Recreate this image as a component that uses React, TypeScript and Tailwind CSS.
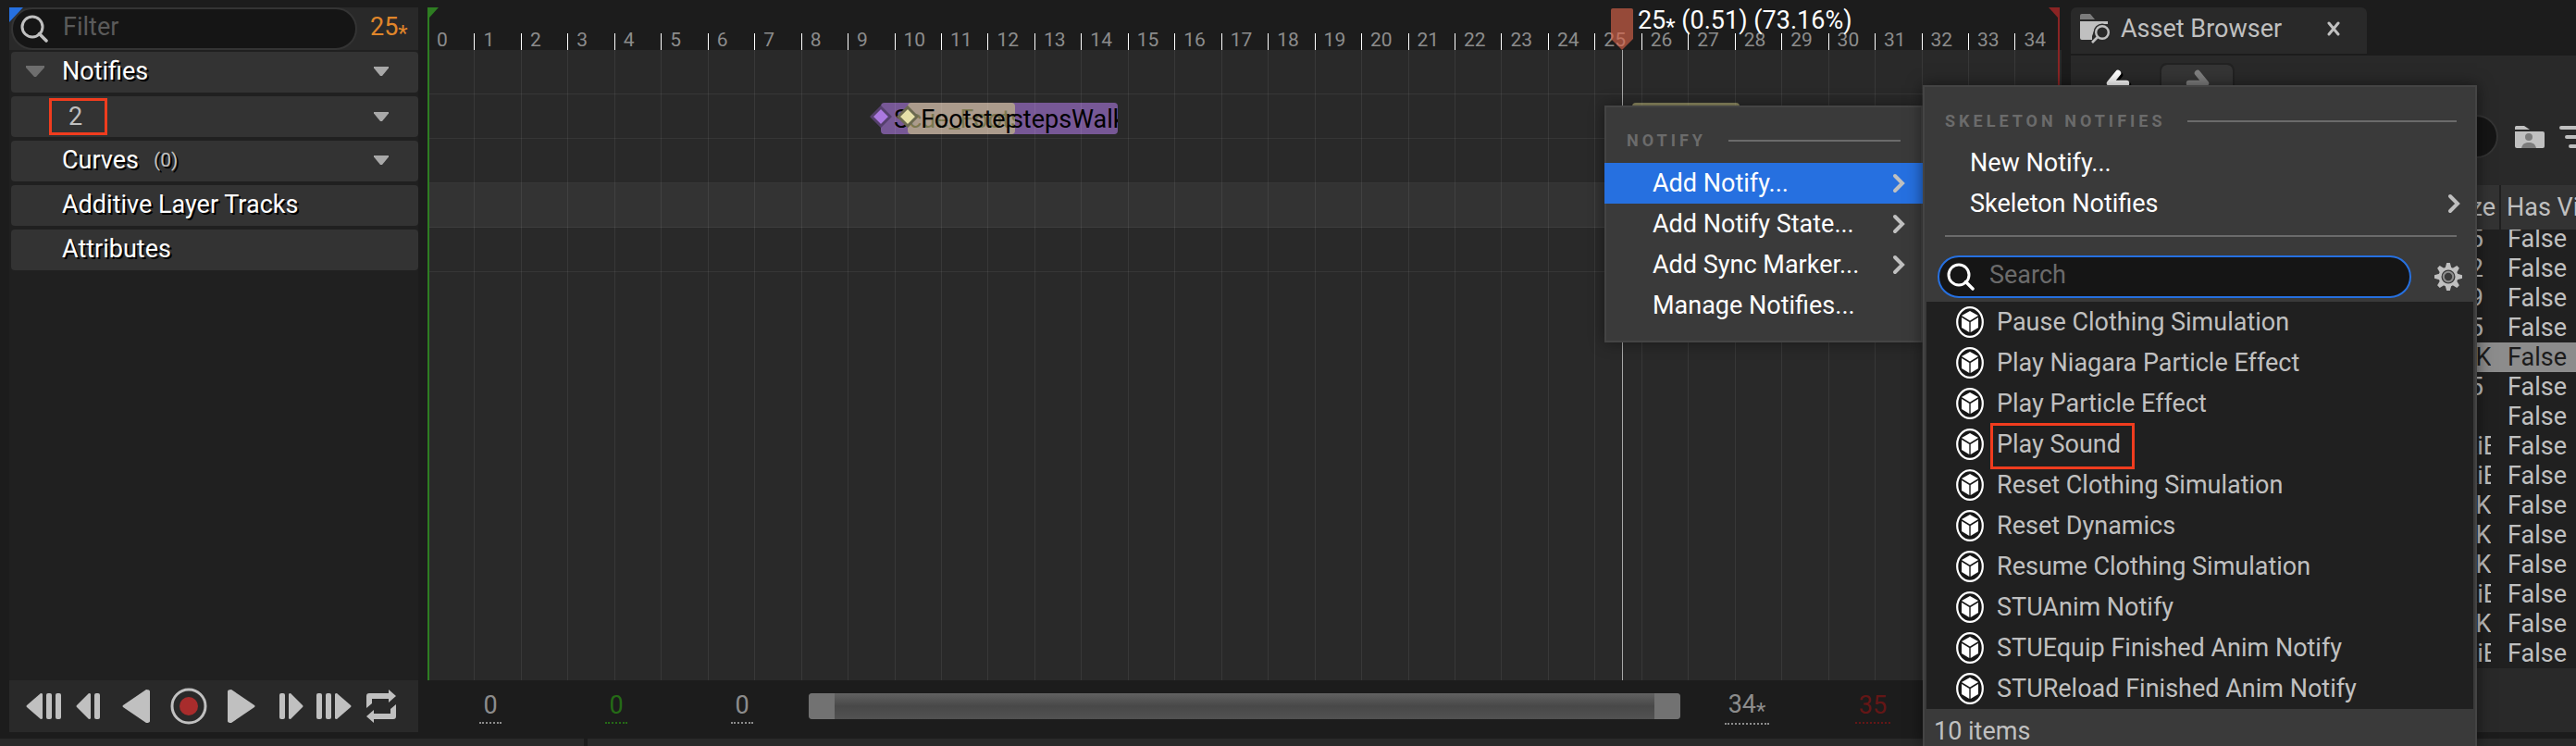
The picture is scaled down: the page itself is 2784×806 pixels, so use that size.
import type { ReactNode } from "react";

const TRACKS = ["Additive Layer Tracks", "Attributes"];

const NOTIFY_MENU = [
	{ label: "Add Notify...", submenu: true, active: true },
	{ label: "Add Notify State...", submenu: true, active: false },
	{ label: "Add Sync Marker...", submenu: true, active: false },
	{ label: "Manage Notifies...", submenu: false, active: false },
];

const NOTIFY_CLASSES = [
	"Pause Clothing Simulation",
	"Play Niagara Particle Effect",
	"Play Particle Effect",
	"Play Sound",
	"Reset Clothing Simulation",
	"Reset Dynamics",
	"Resume Clothing Simulation",
	"STUAnim Notify",
	"STUEquip Finished Anim Notify",
	"STUReload Finished Anim Notify",
];

const ASSETS = [
	"100.35 KiB",
	"105.12 KiB",
	"118.79 KiB",
	"102.65 KiB",
	"84.11 KiB",
	"120.45 KiB",
	"0 B",
	"9.71 KiB",
	"8.25 KiB",
	"66.40 KiB",
	"71.93 KiB",
	"58.02 KiB",
	"7.74 KiB",
	"43.18 KiB",
	"6.81 KiB",
];

const SELECTED_ASSET = 4;
const FRAMES = Array.from({ length: 35 }, (_, i) => i);

function SearchIcon({ className }: { className: string }) {
	return (
		<svg
			viewBox="0 0 30 30"
			className={`size-[30px] shrink-0 ${className}`}
			fill="none"
		>
			<circle cx="13" cy="13" r="11" stroke="currentColor" strokeWidth="3" />
			<path
				d="M20.5 20.5 28 28"
				stroke="currentColor"
				strokeWidth="3.5"
				strokeLinecap="round"
			/>
		</svg>
	);
}

function Chevron() {
	return (
		<svg viewBox="0 0 14 22" className="h-[22px] w-[14px]" fill="none">
			<path
				d="M3 3l8 8-8 8"
				stroke="#c0c0c0"
				strokeWidth="4"
				strokeLinecap="round"
			/>
		</svg>
	);
}

function CubeIcon() {
	return (
		<svg viewBox="0 0 30 34" className="h-[34px] w-[30px] shrink-0">
			<ellipse
				cx="15"
				cy="17"
				rx="13.8"
				ry="15.8"
				fill="#161616"
				stroke="#fff"
				strokeWidth="2.2"
			/>
			<g fill="#fff">
				<path d="M15 5l9 5-9 5.4L6 10z" />
				<path d="M6 12l8.3 5v11L6 23z" />
				<path d="M24 12l-8.3 5v11L24 23z" />
			</g>
		</svg>
	);
}

function GearIcon() {
	const teeth = [0, 45, 90, 135, 180, 225, 270, 315];
	return (
		<svg viewBox="0 0 30 30" className="size-[30px]">
			<g fill="#c0c0c0">
				{teeth.map((a) => (
					<path
						key={a}
						d="M11.5 6 13.2 0h3.6l1.7 6z"
						transform={`rotate(${a} 15 15)`}
					/>
				))}
				<circle cx="15" cy="15" r="10.5" />
			</g>
			<circle cx="15" cy="15" r="7.5" fill="#3a3a3a" />
			<circle cx="15" cy="15" r="5.2" fill="none" stroke="#8c8c8c" strokeWidth="2" />
		</svg>
	);
}

function AssetBrowserIcon() {
	return (
		<svg viewBox="0 0 32 32" className="size-8" fill="none">
			<path d="M0 2a2 2 0 012-2h9l5 6H0z" fill="#7c7c7c" />
			<path d="M0 8h30v3h-6l-8 5-3 8v4H2a2 2 0 01-2-2z" fill="#c0c0c0" />
			<path d="M16 8h14v3H16z" fill="#c0c0c0" />
			<circle cx="24" cy="20" r="9.5" fill="#292929" />
			<circle cx="24" cy="20" r="6.8" stroke="#c0c0c0" strokeWidth="2.4" />
			<path d="M19 25l-6 6" stroke="#c0c0c0" strokeWidth="2.6" />
		</svg>
	);
}

function UserFolderIcon() {
	return (
		<svg viewBox="0 0 32 24" className="h-6 w-8 shrink-0">
			<path d="M0 1.500A1.500 1.500 0 011.500 0H10l6 4H0z" fill="#c0c0c0" />
			<path d="M0 6h30a2 2 0 012 2v14a2 2 0 01-2 2H2a2 2 0 01-2-2z" fill="#c0c0c0" />
			<circle cx="15" cy="12" r="4" fill="#7c7c7c" />
			<path d="M7 24c1-4.500 4-6 8-6s7 1.500 8 6z" fill="#7c7c7c" />
		</svg>
	);
}

function FilterIcon() {
	return (
		<svg viewBox="0 0 36 24" className="h-6 w-9 shrink-0">
			<path
				d="M2 2h32M8 12h20M12 22h12"
				stroke="#c0c0c0"
				strokeWidth="4"
				strokeLinecap="round"
			/>
		</svg>
	);
}

function Arrow({ className }: { className: string }) {
	return (
		<svg viewBox="0 0 26 30" className={`h-[30px] w-[26px] ${className}`} fill="none">
			<path
				d="M13 4 4 15l9 11M5 15h17"
				stroke="currentColor"
				strokeWidth="6.5"
				strokeLinecap="round"
				strokeLinejoin="round"
			/>
		</svg>
	);
}

function Star() {
	return <span className="align-sub text-[24px] leading-none">*</span>;
}

function DropButton({ label }: { label: string }) {
	return (
		<button type="button" aria-label={label} className="ml-auto mr-8">
			<svg viewBox="0 0 16 10" className="h-[10px] w-4">
				<path d="M0 0h16v1.500L9 10H7L0 1.500z" fill="#a8a8a8" />
			</svg>
		</button>
	);
}

function TrackRow({ children }: { children: ReactNode }) {
	return (
		<div className="flex h-11 items-center rounded-sm bg-[#333] pb-[2px] pl-[55px] text-white [text-shadow:2px_2px_0_#000]">
			{children}
		</div>
	);
}

function TransportButton({
	label,
	width,
	children,
}: {
	label: string;
	width: string;
	children: ReactNode;
}) {
	return (
		<button
			type="button"
			aria-label={label}
			className={`flex h-10 items-center justify-center ${width}`}
		>
			{children}
		</button>
	);
}

function Transport() {
	return (
		<div className="flex h-14 shrink-0 items-center bg-[#292929] pl-[13px] text-[#c0c0c0]">
			<TransportButton label="To front" width="w-12">
				<svg viewBox="0 0 38 28" className="h-7 w-[38px]" fill="currentColor">
					<path d="M18 1v26q0 1-2 1L1 15q-1-1 0-2L16 0q2 0 2 1z" />
					<rect x="22" width="6" height="28" rx="2" />
					<rect x="32" width="6" height="28" rx="2" />
				</svg>
			</TransportButton>
			<TransportButton label="To previous" width="w-12">
				<svg viewBox="0 0 26 28" className="h-7 w-[26px]" fill="currentColor">
					<path d="M16 1v26q0 1-2 1L1 15q-1-1 0-2L14 0q2 0 2 1z" />
					<rect x="20" width="6" height="28" rx="2" />
				</svg>
			</TransportButton>
			<TransportButton label="Reverse" width="w-14">
				<svg viewBox="0 0 30 36" className="h-9 w-[30px]" fill="currentColor">
					<path d="M30 2v32q0 2-4 2L1 19q-1-1 0-2L26 0q4 0 4 2z" />
				</svg>
			</TransportButton>
			<TransportButton label="Record" width="w-[58px]">
				<svg viewBox="0 0 40 40" className="size-10">
					<circle cx="20" cy="20" r="18" fill="none" stroke="currentColor" strokeWidth="3" />
					<circle cx="20" cy="20" r="10" fill="#a82c2c" />
				</svg>
			</TransportButton>
			<TransportButton label="Play" width="w-14">
				<svg viewBox="0 0 30 36" className="h-9 w-[30px]" fill="currentColor">
					<path d="M0 2v32q0 2 4 2l25-17q1-1 0-2L4 0Q0 0 0 2z" />
				</svg>
			</TransportButton>
			<TransportButton label="To next" width="w-[52px]">
				<svg viewBox="0 0 26 28" className="h-7 w-[26px]" fill="currentColor">
					<rect width="6" height="28" rx="2" />
					<path d="M10 1v26q0 1 2 1l13-13q1-1 0-2L12 0q-2 0-2 1z" />
				</svg>
			</TransportButton>
			<TransportButton label="To end" width="w-10">
				<svg viewBox="0 0 38 28" className="h-7 w-[38px]" fill="currentColor">
					<rect width="6" height="28" rx="2" />
					<rect x="10" width="6" height="28" rx="2" />
					<path d="M20 1v26q0 1 2 1l15-13q1-1 0-2L22 0q-2 0-2 1z" />
				</svg>
			</TransportButton>
			<TransportButton label="Loop" width="w-[62px]">
				<svg viewBox="0 0 32 36" className="h-9 w-8" fill="currentColor">
					<path d="M0 20V7q0-3 3-3h21V0l8 7-8 7v-4H6v5z" />
					<path d="M32 16v13q0 3-3 3H8v4l-8-7 8-7v4h18v-5z" />
				</svg>
			</TransportButton>
		</div>
	);
}

function TrackPanel() {
	return (
		<aside className="flex w-[442px] shrink-0 flex-col bg-[#202020]">
			<div className="relative flex h-[46px] items-center bg-[#292929] pl-[2px]">
				<svg viewBox="0 0 15 16" className="absolute left-0 top-0 h-4 w-[15px]">
					<path d="M0 0h15L0 16z" fill="#2670e0" />
				</svg>
				<label className="flex h-[46px] w-[374px] items-center gap-4 rounded-full border-2 border-[#343434] bg-[#151515] pl-2">
					<SearchIcon className="text-[#c0c0c0]" />
					<input
						type="text"
						aria-label="Filter"
						placeholder="Filter"
						className="mb-1 w-full min-w-0 bg-transparent outline-none placeholder:text-[#5a5a5a]"
					/>
				</label>
				<span className="ml-[14px] text-[#e0862a]">
					25
					<Star />
				</span>
			</div>
			<div className="mt-[2px] flex flex-1 flex-col gap-1 pl-[2px]">
				<div className="flex h-11 items-center rounded-sm bg-[#333] pb-[2px] pl-4">
					<button
						type="button"
						aria-label="Collapse Notifies"
						className="mr-[19px]"
					>
						<svg viewBox="0 0 20 12" className="h-3 w-5">
							<path d="M0 0h20v2l-9 10H9L0 2z" fill="#6e6e6e" />
						</svg>
					</button>
					<span className="text-white [text-shadow:2px_2px_0_#000]">Notifies</span>
					<DropButton label="Notifies options" />
				</div>
				<div className="flex h-11 items-center rounded-sm bg-[#333] pl-[41px]">
					<span className="flex h-10 w-[63px] items-center border-[3px] border-[#f03c1e] pl-[18px] text-[#c0c0c0]">
						2
					</span>
					<DropButton label="Track options" />
				</div>
				<TrackRow>
					Curves
					<span className="ml-4 text-[21px] text-[#c0c0c0]">(0)</span>
					<DropButton label="Curves options" />
				</TrackRow>
				{TRACKS.map((track) => (
					<TrackRow key={track}>{track}</TrackRow>
				))}
			</div>
			<Transport />
		</aside>
	);
}

function Diamond({ fill, stroke }: { fill: string; stroke: string }) {
	return (
		<svg viewBox="0 0 24 24" className="absolute -left-3 top-[3px] size-6">
			<path d="M12 2l10 10-10 10L2 12z" fill={fill} stroke={stroke} strokeWidth="3" />
		</svg>
	);
}

function NotifyTrack() {
	return (
		<div className="relative h-12 border-b border-[#363636]">
			<div className="absolute left-[27.75%] top-[9px] h-[34px] w-[14.5%]">
				<div className="h-full overflow-hidden whitespace-nowrap rounded-sm bg-[rgba(171,120,224,0.6)] pl-[14px] leading-9 text-black">
					Scue_FootstepsWalk
				</div>
				<Diamond fill="#ab78e0" stroke="#55406c" />
			</div>
			<div className="absolute left-[29.4%] top-[9px] h-[34px] w-[6.57%]">
				<div className="h-full overflow-hidden whitespace-nowrap rounded-sm bg-[rgba(207,200,133,0.6)] pl-[14px] leading-9 text-black">
					Footsteps
				</div>
				<Diamond fill="#e6e0a8" stroke="#6c6a50" />
			</div>
			<div className="absolute left-[73.73%] top-[9px] h-[34px] w-[6.57%] rounded-sm bg-[rgba(207,200,133,0.6)]" />
		</div>
	);
}

function FrameValue({ value, color }: { value: string; color: string }) {
	const starred = value.endsWith("*");
	return (
		<div className={`flex w-[136px] shrink-0 justify-center ${color}`}>
			<button
				type="button"
				className="border-b-2 border-dotted border-current px-1 leading-9"
			>
				{starred ? value.slice(0, -1) : value}
				{starred && <Star />}
			</button>
		</div>
	);
}

function Timeline() {
	return (
		<section className="relative mx-[10px] flex min-w-0 flex-1 flex-col">
			<div className="flex h-[46px] items-end text-[21px] leading-[14px] text-[#8c8c8c]">
				{FRAMES.map((frame) => (
					<div
						key={frame}
						className="h-[18px] min-w-0 flex-1 border-l border-white pl-[9px]"
					>
						{frame}
					</div>
				))}
			</div>
			<div className="relative flex-1 bg-[#292929]">
				<div className="h-12 border-b border-[#363636]" />
				<NotifyTrack />
				<div className="h-12 border-b border-[#363636]" />
				<div className="h-12 border-b border-[#3e3e3e] bg-[#333]" />
				<div className="h-12 border-b border-[#363636]" />
				<div className="pointer-events-none absolute inset-0 flex">
					{FRAMES.map((frame) => (
						<div key={frame} className="flex-1 border-l border-white/7" />
					))}
				</div>
				<div className="absolute inset-y-0 left-[73.1%] w-px bg-[#a8a8a8]" />
			</div>
			<div className="flex h-14 items-center">
				<FrameValue value="0" color="text-[#8c8c8c]" />
				<FrameValue value="0" color="text-[#256b16]" />
				<FrameValue value="0" color="text-[#8c8c8c]" />
				<div className="mx-1 flex h-7 flex-1 justify-between rounded-sm bg-linear-to-b from-[#626262] via-[#484848] to-[#525252]">
					<div className="w-7 rounded-l-sm bg-[#727272]" />
					<div className="w-7 rounded-r-sm bg-[#727272]" />
				</div>
				<FrameValue value="34*" color="text-[#8c8c8c]" />
				<FrameValue value="35" color="text-[#641616]" />
				<div className="w-[136px] shrink-0" />
			</div>

			<div className="absolute bottom-14 left-0 top-0 w-[2px] bg-[#2e7d22]" />
			<svg viewBox="0 0 12 12" className="absolute left-0 top-0 size-3">
				<path d="M0 0h12L2 11H0z" fill="#2e7d22" />
			</svg>
			<div className="absolute bottom-14 right-[2px] top-0 w-[2px] bg-[#8a2424]" />
			<svg viewBox="0 0 12 12" className="absolute right-[2px] top-0 size-3">
				<path d="M12 0H0l10 11h2z" fill="#8a2424" />
			</svg>
			<div className="absolute left-[73.1%] top-0 -ml-3 flex items-start gap-[5px] whitespace-nowrap text-white">
				<svg viewBox="0 0 24 46" className="h-[46px] w-6">
					<path
						d="M2 1h20q2 0 2 2v31L12 46 0 34V3q0-2 2-2z"
						fill="#d8644a"
						fillOpacity="0.65"
					/>
				</svg>
				<span className="leading-7">
					25
					<Star /> (0.51) (73.16%)
				</span>
			</div>
		</section>
	);
}

function AssetBrowser() {
	return (
		<section className="flex w-[546px] shrink-0 flex-col overflow-hidden text-[#c0c0c0]">
			<div className="flex h-[50px] w-80 items-center rounded-t-md bg-[#292929] pb-1 pl-[10px]">
				<AssetBrowserIcon />
				<h2 className="ml-3">Asset Browser</h2>
				<button type="button" aria-label="Close tab" className="ml-auto mr-7">
					<svg viewBox="0 0 16 16" className="size-4">
						<path
							d="M3 2l10 12M13 2 3 14"
							stroke="#c0c0c0"
							strokeWidth="3"
							strokeLinecap="round"
						/>
					</svg>
				</button>
			</div>
			<div className="mt-[2px] flex h-[140px] shrink-0 flex-col bg-[#292929] pt-[10px]">
				<div className="flex h-11 gap-2 pl-3">
					<button
						type="button"
						aria-label="Back"
						className="flex w-[78px] items-center justify-center pb-1 text-white"
					>
						<Arrow className="drop-shadow-[2px_2px_0_#000]" />
					</button>
					<button
						type="button"
						aria-label="Forward"
						className="flex w-[77px] items-center justify-center rounded-md bg-[#353535] pb-1 text-[#808080] outline-2 outline-[#222]"
					>
						<Arrow className="-scale-x-100" />
					</button>
				</div>
				<div className="mt-[10px] flex h-[47px] items-center">
					<input
						type="text"
						aria-label="Search Assets"
						className="mx-[10px] h-[47px] w-[452px] shrink-0 rounded-full border-2 border-[#343434] bg-[#151515] px-6"
					/>
					<div className="ml-2 flex shrink-0 gap-4">
						<UserFolderIcon />
						<FilterIcon />
					</div>
				</div>
			</div>
			<table className="w-[630px] table-fixed bg-[#202020]">
				<thead>
					<tr className="h-12 bg-[#333] text-left">
						<th className="w-[358px] border-r-2 border-[#202020]" />
						<th className="w-[106px] border-r-2 border-[#202020] pr-1 text-right font-normal">
							Size
						</th>
						<th className="whitespace-nowrap pl-[6px] font-normal">Has Virtualized</th>
					</tr>
				</thead>
			</table>
			<div className="flex h-[474px] shrink-0 flex-col justify-end overflow-hidden bg-[#202020]">
				<table className="w-[630px] table-fixed leading-8">
					<tbody>
						{ASSETS.map((size, i) => (
							<tr
								key={size}
								className={
									i === SELECTED_ASSET ? "bg-[#8c8c8c] text-[#1c1c1c]" : ""
								}
							>
								<td className="h-8 w-[358px]" />
								<td className="w-[106px] whitespace-nowrap pl-[5px] pr-[10px]">
									<div className="h-8 overflow-hidden">{size}</div>
								</td>
								<td className="pl-2">False</td>
							</tr>
						))}
					</tbody>
				</table>
			</div>
			<div className="flex-1 bg-[#292929]" />
		</section>
	);
}

function MenuHeading({ children }: { children: ReactNode }) {
	return (
		<div className="flex items-center gap-6 text-[18px] font-bold leading-6 tracking-[4px] text-[#6b6b6b]">
			{children}
			<div className="h-[2px] flex-1 bg-[#6b6b6b]" />
		</div>
	);
}

function NotifyMenu() {
	return (
		<div
			role="menu"
			className="absolute left-[1734px] top-[114px] w-[344px] bg-[#3a3a3a] pb-[18px] pt-[26px] text-white shadow-[0_0_16px_rgba(0,0,0,0.4)] outline-2 -outline-offset-2 outline-[#444]"
		>
			<div className="px-6 pb-3">
				<MenuHeading>NOTIFY</MenuHeading>
			</div>
			{NOTIFY_MENU.map((item) => (
				<button
					key={item.label}
					type="button"
					role="menuitem"
					className={`relative flex h-11 w-full items-center justify-between pl-[52px] pr-[19px] ${item.active ? "bg-[#2670e0]" : ""}`}
				>
					{item.label}
					{item.submenu && <Chevron />}
				</button>
			))}
		</div>
	);
}

function SkeletonMenu() {
	return (
		<div
			role="menu"
			className="absolute bottom-0 left-[2078px] top-[92px] flex w-[599px] flex-col overflow-hidden border-2 border-b-0 border-[#444] bg-[#3a3a3a] pt-[25px] text-white shadow-[0_0_16px_rgba(0,0,0,0.5)]"
		>
			<div className="pl-[22px] pr-5">
				<MenuHeading>SKELETON NOTIFIES</MenuHeading>
			</div>
			<button
				type="button"
				role="menuitem"
				className="mt-[11px] flex h-11 shrink-0 items-center pl-[49px]"
			>
				New Notify...
			</button>
			<button
				type="button"
				role="menuitem"
				className="flex h-11 shrink-0 items-center justify-between pl-[49px] pr-4"
			>
				Skeleton Notifies
				<Chevron />
			</button>
			<hr className="ml-[22px] mr-5 mt-3 border-t-2 border-[#6b6b6b]" />
			<div className="mb-1 mt-5 flex shrink-0 items-center pl-[14px]">
				<label className="flex h-[46px] w-[512px] items-center gap-4 rounded-full border-2 border-[#2670e0] bg-[#151515] pl-2">
					<SearchIcon className="text-white" />
					<input
						type="text"
						aria-label="Search"
						placeholder="Search"
						className="mb-1 w-full min-w-0 bg-transparent outline-none placeholder:text-[#6b6b6b]"
					/>
				</label>
				<button type="button" aria-label="Settings" className="ml-[25px]">
					<GearIcon />
				</button>
			</div>
			<ul className="mx-[2px] shrink-0 bg-[#202020] text-[#c0c0c0]">
				{NOTIFY_CLASSES.map((name) => (
					<li key={name} className="relative">
						<button
							type="button"
							className="flex h-11 w-full items-center gap-[14px] pl-8"
						>
							<CubeIcon />
							{name}
						</button>
						{name === "Play Sound" && (
							<span className="absolute -top-px left-[69px] h-[50px] w-[156px] border-[3px] border-[#f03c1e]" />
						)}
					</li>
				))}
			</ul>
			<p className="pl-[10px] pt-2 text-[#c0c0c0]">10 items</p>
		</div>
	);
}

export default function App() {
	return (
		<main className="relative flex h-screen flex-col overflow-hidden bg-[#1c1c1c] pt-2 font-[Roboto,sans-serif] text-[27px] leading-8">
			<div className="flex min-h-0 flex-1 pl-[10px]">
				<TrackPanel />
				<Timeline />
				<AssetBrowser />
			</div>
			<footer className="mt-[7px] flex h-2 shrink-0 gap-1">
				<div className="w-[631px] bg-[#292929]" />
				<div className="flex-1 bg-[#292929]" />
			</footer>
			<NotifyMenu />
			<SkeletonMenu />
		</main>
	);
}
